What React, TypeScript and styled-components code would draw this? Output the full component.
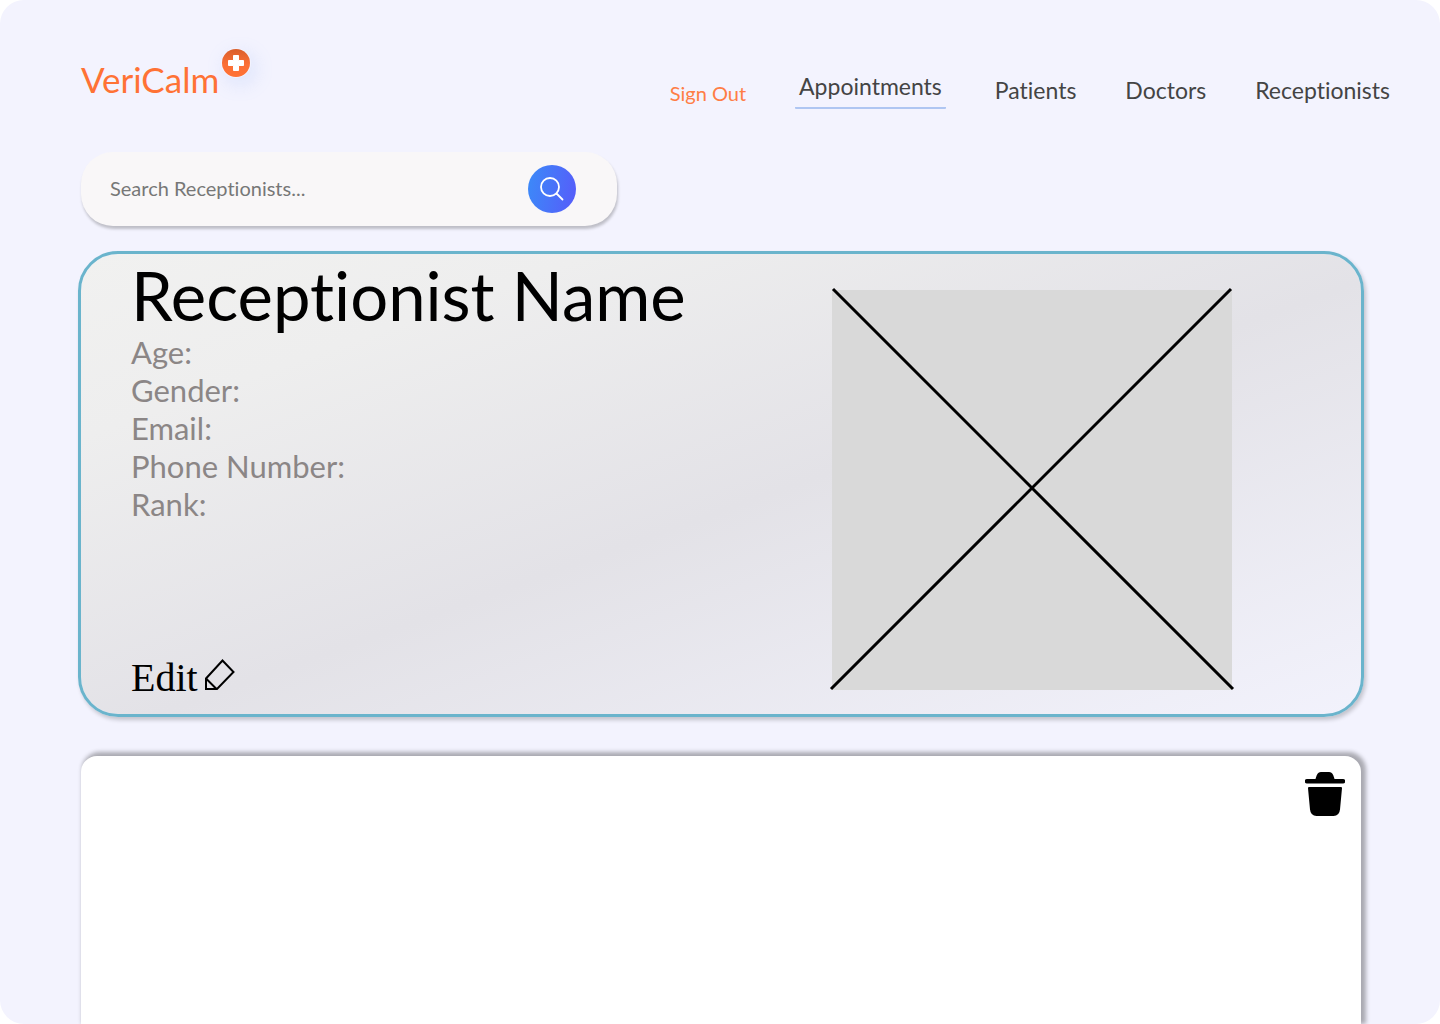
import React from "react";
import styled, { createGlobalStyle } from "styled-components";

const GlobalStyle = createGlobalStyle`
  *, *::before, *::after { box-sizing: border-box; }
  body { margin: 0; background: #ffffff; font-family: Lato, "Open Sans", sans-serif; font-variant-ligatures: none; }
  h1, p, ul { margin: 0; padding: 0; }
  ul { list-style: none; }
  button { border: 0; padding: 0; background: none; font: inherit; color: inherit; cursor: pointer; }
`;

const Page = styled.div`
  display: flex;
  flex-direction: column;
  min-height: 100vh;
  border-radius: 24px;
  overflow: hidden;
  background: #f3f3fe;
`;

const Header = styled.header`
  display: flex;
  justify-content: space-between;
  align-items: flex-end;
  padding: 48px 50px 0 81px;
`;

const Logo = styled.a`
  display: flex;
  align-items: flex-start;
  gap: 2px;
  height: 61px;
  color: #ff7235;
  text-decoration: none;
`;

const LogoText = styled.span`
  padding-top: 10px;
  font-size: 35px;
  line-height: 42px;
`;

const LogoMark = styled.svg`
  width: 30px;
  height: 30px;
  border-radius: 50%;
  box-shadow: 4px 6px 20px rgba(120, 160, 240, 0.2);
`;

const Nav = styled.nav`
  display: flex;
  align-items: center;
  gap: 49px;
`;

const NavLink = styled.a<{ $active?: boolean }>`
  padding: ${(p) => (p.$active ? "0 4px 6px" : "0")};
  border-bottom: ${(p) => (p.$active ? "2px solid #afc6f2" : "0")};
  border-radius: 1px;
  color: #444444;
  font-size: 23px;
  line-height: 29px;
  text-decoration: none;
`;

const SignOut = styled.button`
  align-self: flex-end;
  padding-bottom: 4px;
  color: #ff7d45;
  font-size: 20px;
  line-height: 24px;
`;

const Main = styled.main`
  display: flex;
  flex: 1;
  flex-direction: column;
  padding: 43px 76px 0 78px;
`;

const SearchForm = styled.form`
  display: flex;
  align-items: center;
  width: 536px;
  max-width: 100%;
  height: 74px;
  margin-left: 3px;
  padding: 0 41px 0 29px;
  border-radius: 32px;
  background: #f9f7f8;
  box-shadow: 1px 3px 3px rgba(0, 0, 0, 0.22);
`;

const SearchInput = styled.input`
  flex: 1;
  min-width: 0;
  padding: 0 0 2px;
  border: 0;
  outline: 0;
  background: transparent;
  color: #777777;
  font-family: inherit;
  font-size: 20px;
  line-height: 24px;
  font-variant-ligatures: inherit;
  &::placeholder { color: #777777; opacity: 1; }
`;

const SearchButton = styled.button`
  display: grid;
  place-items: center;
  width: 48px;
  height: 48px;
  border-radius: 50%;
  background: linear-gradient(100deg, #3b8bf8, #575bfa);
`;

const ProfileCard = styled.section`
  display: flex;
  justify-content: space-between;
  margin-top: 25px;
  padding: 4px 129px 14px 50px;
  border: 3px solid #6ab4cc;
  border-radius: 40px;
  background: linear-gradient(to bottom right, #f1f1f0, #eeeeee 20%, #e3e2e7 53%, #f2f2fc) padding-box;
  box-shadow: 2px 3px 4px rgba(0, 0, 0, 0.2);
`;

const Profile = styled.div`
  display: flex;
  flex-direction: column;
  align-items: flex-start;
`;

const Name = styled.h1`
  margin-bottom: 1px;
  color: #000000;
  font-size: 67px;
  font-weight: 400;
  line-height: 74px;
`;

const Details = styled.ul`
  color: #8b8686;
  font-size: 31px;
  line-height: 38px;
`;

const EditButton = styled.button`
  display: flex;
  align-items: center;
  gap: 6px;
  margin-top: auto;
  color: #000000;
  font-family: "Liberation Serif", serif;
  font-size: 40px;
  line-height: 44px;
`;

const PencilIcon = styled.svg`
  width: 32px;
  height: 32px;
  margin-bottom: 6px;
`;

const Photo = styled.svg`
  flex: none;
  width: 400px;
  height: 400px;
  margin: 32px 0 10px;
  overflow: visible;
  background: #d9d9d9;
`;

const Panel = styled.section`
  display: flex;
  flex: 1;
  justify-content: flex-end;
  align-items: flex-start;
  min-height: 268px;
  margin: 39px 3px 0;
  padding: 16px;
  border-radius: 16px 16px 0 0;
  background: #ffffff;
  box-shadow: 3px -2px 4px 2px rgba(0, 0, 0, 0.3);
`;

const DeleteButton = styled.button`
  display: block;
  width: 40px;
  height: 44px;
`;

const links = ["Appointments", "Patients", "Doctors", "Receptionists"];
const fields = ["Age:", "Gender:", "Email:", "Phone Number:", "Rank:"];

export default function App() {
  return (
    <>
      <GlobalStyle />
      <Page>
        <Header>
          <Logo href="#home">
            <LogoText>VeriCalm</LogoText>
            <LogoMark viewBox="0 0 30 30" aria-hidden="true">
              <defs>
                <linearGradient id="mark" x1="0" y1="0" x2="0" y2="1">
                  <stop offset="0" stopColor="#d95f2c" />
                  <stop offset="0.55" stopColor="#fb6f35" />
                  <stop offset="1" stopColor="#ff7235" />
                </linearGradient>
              </defs>
              <circle cx="15" cy="15" r="14" fill="url(#mark)" />
              <path d="M12.5 7.500h5v5h5v5h-5v5h-5v-5h-5v-5h5z" fill="#fff" stroke="#fff" strokeLinejoin="round" />
            </LogoMark>
          </Logo>
          <Nav aria-label="Main">
            <SignOut type="button">Sign Out</SignOut>
            {links.map((label, i) => (
              <NavLink key={label} href={"#" + label.toLowerCase()} $active={i === 0}>
                {label}
              </NavLink>
            ))}
          </Nav>
        </Header>
        <Main>
          <SearchForm role="search" onSubmit={(e) => e.preventDefault()}>
            <SearchInput type="text" aria-label="Search receptionists" placeholder="Search Receptionists..." />
            <SearchButton type="submit" aria-label="Search">
              <svg width="24" height="24" viewBox="0 0 24 24" fill="none" stroke="#fff" strokeWidth="1.8" strokeLinecap="round">
                <circle cx="10" cy="10" r="9" />
                <path d="M16.500 16.500L22.500 22.500" />
              </svg>
            </SearchButton>
          </SearchForm>
          <ProfileCard>
            <Profile>
              <Name>Receptionist Name</Name>
              <Details>
                {fields.map((field) => (
                  <li key={field}>{field}</li>
                ))}
              </Details>
              <EditButton type="button">
                Edit
                <PencilIcon viewBox="0 0 32 32" fill="none" stroke="#000" strokeWidth="2" aria-hidden="true">
                  <path d="M2 19.500L18.500 1.500L29.500 13L13 30H2zM2 19.500L12.500 30" />
                </PencilIcon>
              </EditButton>
            </Profile>
            <Photo viewBox="0 0 400 400" role="img" aria-label="Receptionist photo" stroke="#000" strokeWidth="3">
              <path d="M1 -1L401 399M399 -1L-1 399" />
            </Photo>
          </ProfileCard>
          <Panel>
            <DeleteButton type="button" aria-label="Delete">
              <svg width="40" height="44" viewBox="0 0 40 44" fill="#000">
                <path d="M2 7h8.500c1-3 1.500-7 5.500-7h8c4 0 4.500 4 5.500 7H38a2 2 0 0 1 0 4.500H2A2 2 0 0 1 2 7z" />
                <path d="M4 15h32q1 0 1 1l-2 21.500q-.7 6.500-6.500 6.500h-17Q5.700 44 5 37.500L3 16q0-1 1-1z" />
              </svg>
            </DeleteButton>
          </Panel>
        </Main>
      </Page>
    </>
  );
}
